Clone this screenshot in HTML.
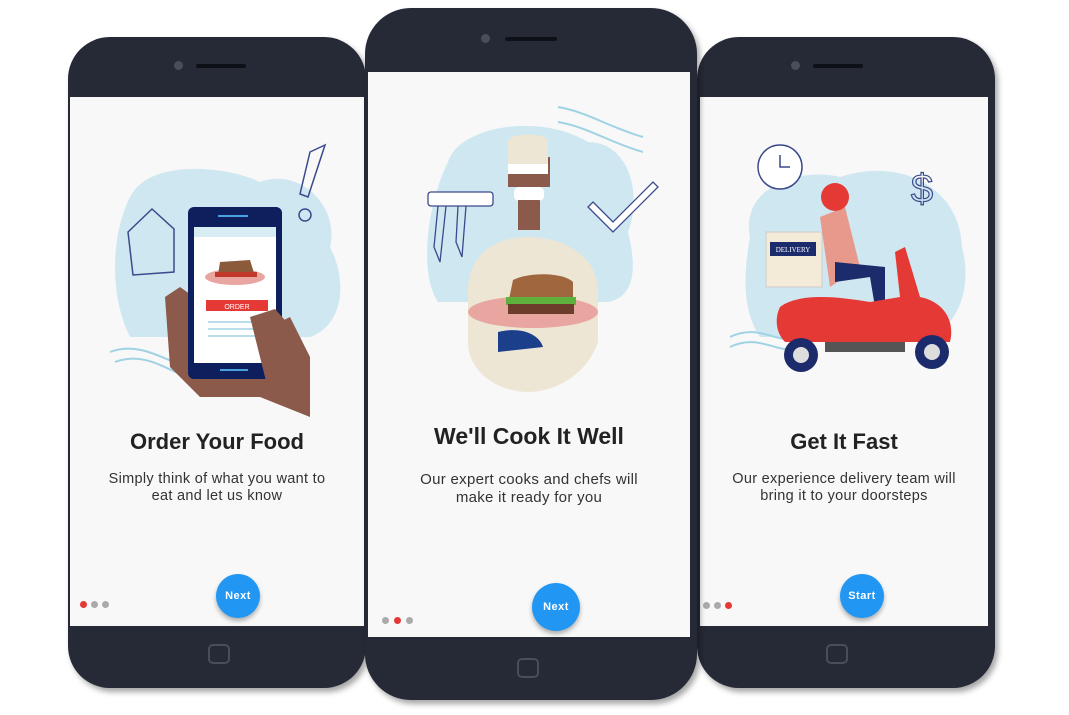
<!DOCTYPE html>
<html><head><style>
*{margin:0;padding:0;box-sizing:border-box}
body{width:1069px;height:715px;background:#fff;position:relative;overflow:hidden;font-family:"Liberation Sans",sans-serif}
.ph{position:absolute;background:#262a36;border-radius:42px;box-shadow:3px 4px 6px rgba(0,0,0,.35)}
.scr{position:absolute;background:#f8f8f8;overflow:hidden}
.cam{position:absolute;width:9px;height:9px;border-radius:50%;background:#4a4e5a}
.spk{position:absolute;height:4px;border-radius:2px;background:#0e1018}
.home{position:absolute;width:22px;height:20px;border:2px solid #4a4e5a;border-radius:5px}
h2{position:absolute;width:100%;text-align:center;font-size:22px;font-weight:bold;color:#222}
p.s{position:absolute;width:100%;text-align:center;font-size:14.5px;color:#333;line-height:17px;letter-spacing:.3px}
.btn{position:absolute;border-radius:50%;background:#2196f3;color:#fff;font-weight:bold;font-size:11px;text-align:center;box-shadow:0 3px 5px rgba(0,0,0,.3);letter-spacing:.5px}
.d{position:absolute;width:7px;height:7px;border-radius:50%;background:#aaa}
.r{background:#e53935}
svg{position:absolute}
</style></head><body>

<!-- left phone -->
<div class="ph" style="left:68px;top:37px;width:298px;height:651px">
  <div class="cam" style="left:106px;top:24px"></div>
  <div class="spk" style="left:128px;top:27px;width:50px"></div>
  <div class="scr" style="left:2px;top:60px;width:294px;height:529px">
    <svg width="294" height="330" viewBox="0 0 294 330">
      <path d="M60 100 C80 60 160 70 190 85 C230 70 270 110 260 150 C280 190 270 230 240 240 L60 240 C40 200 40 140 60 100Z" fill="#cfe7f0"/>
      <path d="M58 135 L82 112 L104 132 L104 175 L63 178Z" fill="none" stroke="#3b4a8c" stroke-width="1.5"/>
      <path d="M240 55 L255 48 L238 100 L230 97Z" fill="none" stroke="#3b4a8c" stroke-width="1.5"/>
      <circle cx="235" cy="118" r="6" fill="none" stroke="#3b4a8c" stroke-width="1.5"/>
      <path d="M40 255 C80 240 110 280 150 275 M45 265 C85 250 110 290 150 285" fill="none" stroke="#9fd3e4" stroke-width="2"/>
      <path d="M110 190 L95 200 L100 270 L130 300 L190 300 L240 320 L240 260 L220 220 L180 240Z" fill="#8c5a4a"/>
      <rect x="118" y="110" width="94" height="172" rx="6" fill="#0d1f5c"/>
      <rect x="124" y="130" width="82" height="136" fill="#fff"/>
      <rect x="124" y="130" width="82" height="10" fill="#d8ecf3"/>
      <ellipse cx="165" cy="180" rx="30" ry="8" fill="#e9a5a0"/>
      <path d="M148 178 L150 165 L180 163 L184 176Z" fill="#8a5a3a"/>
      <rect x="145" y="175" width="42" height="5" fill="#c0392b"/>
      <rect x="136" y="203" width="62" height="11" fill="#e53935"/>
      <text x="167" y="212" font-size="7" fill="#fff" text-anchor="middle" font-family="Liberation Sans">ORDER</text>
      <path d="M138 225 H196 M138 232 H196 M138 239 H196" stroke="#9fd3e4" stroke-width="1.5"/>
      <path d="M180 220 L205 212 L230 240 L240 300 L200 300Z" fill="#8c5a4a"/>
      <rect x="148" y="118" width="30" height="2" fill="#4aa3df"/>
      <rect x="150" y="272" width="28" height="2" fill="#4aa3df"/>
    </svg>
    <h2 style="top:332px">Order Your Food</h2>
    <p class="s" style="top:374px">Simply think of what you want to<br>eat and let us know</p>
    <div class="btn" style="left:146px;top:477px;width:44px;height:44px;line-height:44px">Next</div>
    <div class="d r" style="left:10px;top:504px"></div><div class="d" style="left:21px;top:504px"></div><div class="d" style="left:32px;top:504px"></div>
  </div>
  <div class="home" style="left:140px;top:607px"></div>
</div>

<!-- right phone -->
<div class="ph" style="left:697px;top:37px;width:298px;height:651px">
  <div class="cam" style="left:94px;top:24px"></div>
  <div class="spk" style="left:116px;top:27px;width:50px"></div>
  <div class="scr" style="left:3px;top:60px;width:288px;height:529px">
    <svg width="288" height="330" viewBox="0 0 288 330">
      <path d="M50 140 C40 90 100 70 140 80 C200 60 260 90 262 150 C275 200 250 240 220 240 L60 240 C40 210 45 170 50 140Z" fill="#cfe7f0"/>
      <circle cx="80" cy="70" r="22" fill="#fff" stroke="#3b4a8c" stroke-width="1.5"/>
      <path d="M80 58 V70 H90" stroke="#3b4a8c" stroke-width="1.5" fill="none"/>
      <text x="222" y="105" font-size="40" fill="none" stroke="#3b4a8c" stroke-width="1.2" text-anchor="middle" font-family="Liberation Sans">$</text>
      <path d="M30 240 C60 225 80 250 100 240 M30 250 C60 235 80 260 100 250" fill="none" stroke="#9fd3e4" stroke-width="2"/>
      <rect x="66" y="135" width="56" height="55" fill="#f3ead8" stroke="#ccc"/>
      <rect x="70" y="145" width="46" height="14" fill="#1c2b6b"/>
      <text x="93" y="155" font-size="7" fill="#fff" text-anchor="middle" font-family="Liberation Serif">DELIVERY</text>
      <path d="M120 120 L145 110 L160 170 L130 190Z" fill="#e79a8c"/>
      <circle cx="135" cy="100" r="14" fill="#e53935"/>
      <path d="M135 165 L185 170 L185 210 L175 210 L170 180 L135 185Z" fill="#1c2b6b"/>
      <path d="M80 210 C100 195 140 200 170 205 L200 200 L195 155 L205 150 L220 200 C245 205 255 225 250 245 L85 245 C75 235 75 220 80 210Z" fill="#e53935"/>
      <circle cx="101" cy="258" r="17" fill="#1c2b6b"/><circle cx="101" cy="258" r="8" fill="#ddd"/>
      <circle cx="232" cy="255" r="17" fill="#1c2b6b"/><circle cx="232" cy="255" r="8" fill="#ddd"/>
      <rect x="125" y="245" width="80" height="10" fill="#555"/>
    </svg>
    <h2 style="top:332px">Get It Fast</h2>
    <p class="s" style="top:374px">Our experience delivery team will<br>bring it to your doorsteps</p>
    <div class="btn" style="left:140px;top:477px;width:44px;height:44px;line-height:44px">Start</div>
    <div class="d" style="left:3px;top:505px"></div><div class="d" style="left:14px;top:505px"></div><div class="d r" style="left:25px;top:505px"></div>
  </div>
  <div class="home" style="left:129px;top:607px"></div>
</div>

<!-- middle phone -->
<div class="ph" style="left:365px;top:8px;width:332px;height:692px;border-radius:46px">
  <div class="cam" style="left:116px;top:26px"></div>
  <div class="spk" style="left:140px;top:29px;width:52px"></div>
  <div class="scr" style="left:3px;top:64px;width:322px;height:565px">
    <svg width="322" height="320" viewBox="0 0 322 320">
      <path d="M190 35 C220 40 240 55 275 65 M190 50 C220 55 240 70 275 80" fill="none" stroke="#9fd3e4" stroke-width="2"/>
      <path d="M80 90 C90 55 170 40 220 70 C260 70 275 120 260 160 C270 200 265 225 240 230 L70 230 C50 200 60 130 80 90Z" fill="#cfe7f0"/>
      <rect x="60" y="120" width="65" height="14" rx="3" fill="#fff" stroke="#3b4a8c" stroke-width="1.3"/>
      <path d="M70 134 L66 175 L72 190 L78 134 M90 134 L88 170 L94 185 L98 134" fill="none" stroke="#3b4a8c" stroke-width="1.3"/>
      <path d="M225 130 L245 150 L285 110 L290 115 L245 160 L220 135Z" fill="#fff" stroke="#3b4a8c" stroke-width="1.3"/>
      <path d="M100 220 C100 180 130 165 160 165 C190 165 230 180 230 220 L230 270 C220 300 190 320 160 320 C130 320 100 300 100 270Z" fill="#eee6d4"/>
      <rect x="140" y="85" width="42" height="30" fill="#8c5a4a"/>
      <path d="M140 70 C140 60 180 60 180 70 L180 92 L140 92Z" fill="#eee6d4"/>
      <rect x="140" y="92" width="40" height="10" fill="#fff"/>
      <rect x="146" y="115" width="30" height="14" rx="5" fill="#fff"/>
      <rect x="150" y="128" width="22" height="30" fill="#8c5a4a"/>
      <ellipse cx="165" cy="240" rx="65" ry="16" fill="#e9a5a0"/>
      <path d="M140 232 L145 208 C160 200 195 200 205 210 L205 232Z" fill="#a0673f"/>
      <rect x="138" y="225" width="70" height="8" fill="#5db13c"/>
      <rect x="140" y="232" width="66" height="10" fill="#6b3d2a"/>
      <path d="M130 260 C150 255 170 260 175 275 L130 280Z" fill="#1c3f8c"/>
    </svg>
    <h2 style="top:351px;font-size:23px">We'll Cook It Well</h2>
    <p class="s" style="top:399px;font-size:15px;line-height:18px">Our expert cooks and chefs will<br>make it ready for you</p>
    <div class="btn" style="left:164px;top:511px;width:48px;height:48px;line-height:48px">Next</div>
    <div class="d" style="left:14px;top:545px"></div><div class="d r" style="left:26px;top:545px"></div><div class="d" style="left:38px;top:545px"></div>
  </div>
  <div class="home" style="left:152px;top:650px"></div>
</div>
</body></html>
